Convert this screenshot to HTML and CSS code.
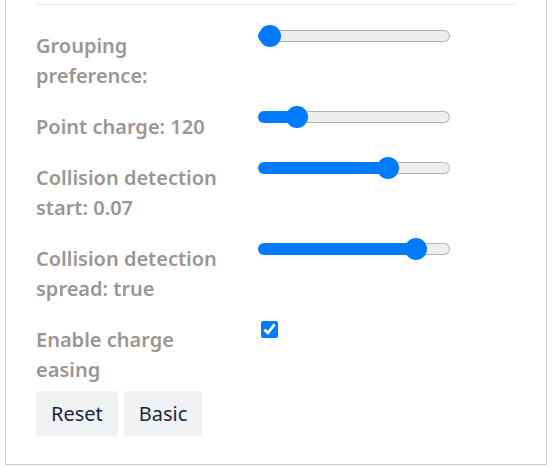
FILE: index.html
```html
<!DOCTYPE html>
<html lang="en">
<head>
<meta charset="utf-8">
<title>Force settings</title>
<link rel="stylesheet" href="styles.css">
</head>
<body>
<div class="panel">
  <hr class="divider">
  <div class="row">
    <label class="label" for="grp">Grouping preference:</label>
    <input class="slider" id="grp" type="range" min="0" max="100" value="0" style="--fill: 5.7%">
  </div>
  <div class="row">
    <label class="label" for="chg">Point charge: 120</label>
    <input class="slider" id="chg" type="range" min="0" max="100" value="16" style="--fill: 19.8%">
  </div>
  <div class="row">
    <label class="label" for="cds">Collision detection start: 0.07</label>
    <input class="slider" id="cds" type="range" min="0" max="100" value="70" style="--fill: 67.7%">
  </div>
  <div class="row">
    <label class="label" for="cdp">Collision detection spread: true</label>
    <input class="slider" id="cdp" type="range" min="0" max="100" value="87" style="--fill: 82.8%">
  </div>
  <div class="row row-last">
    <label class="label" for="ease">Enable charge easing</label>
    <input class="check" id="ease" type="checkbox" checked>
  </div>
  <div class="actions">
    <button class="btn" type="button">Reset</button>
    <button class="btn" type="button">Basic</button>
  </div>
</div>
</body>
</html>
```

FILE: styles.css
```css
html, body {
  margin: 0;
  padding: 0;
  background: #fff;
}

body {
  font-family: "Noto Sans", "Open Sans", sans-serif;
}

.panel {
  box-sizing: border-box;
  margin-left: 5px;
  width: 542px;
  height: 465px;
  border: 1px solid #cccccc;
  border-top: none;
  padding: 4px 30px 0 30px;
}

.divider {
  margin: 0 0 20px 0;
  border: none;
  border-top: 1px solid #e6e6e6;
  height: 0;
}

.row {
  display: grid;
  grid-template-columns: 200px 192px;
  column-gap: 22px;
  align-items: start;
  margin-bottom: 15px;
}

.row-last {
  margin-bottom: 6px;
}

.label {
  padding-top: 6px;
  font-size: 20px;
  font-weight: 600;
  line-height: 30px;
  color: #9a9694;
}

.slider {
  -webkit-appearance: none;
  appearance: none;
  display: block;
  width: 192px;
  height: 22px;
  margin: 0;
  padding: 0;
  background: transparent;
}

.slider::-webkit-slider-runnable-track {
  box-sizing: border-box;
  height: 12px;
  border: 1px solid transparent;
  border-radius: 6px;
  background:
    linear-gradient(90deg, #007bff var(--fill), transparent var(--fill)) border-box,
    linear-gradient(#eeeeee, #eeeeee) padding-box,
    linear-gradient(#b3b3b3, #b3b3b3) border-box;
}

.slider::-webkit-slider-thumb {
  -webkit-appearance: none;
  appearance: none;
  width: 22px;
  height: 22px;
  margin-top: -6px;
  border: none;
  border-radius: 50%;
  background: #007bff;
}

.check {
  width: 17px;
  height: 17px;
  margin: 2px 0 0 3px;
  accent-color: #007bff;
}

.actions {
  display: flex;
  gap: 6px;
}

.btn {
  height: 45px;
  padding: 0 15px;
  border: none;
  border-radius: 4px;
  background: #f0f1f3;
  color: #1c2541;
  font-family: "Noto Sans", "Open Sans", sans-serif;
  font-size: 20px;
}
```
